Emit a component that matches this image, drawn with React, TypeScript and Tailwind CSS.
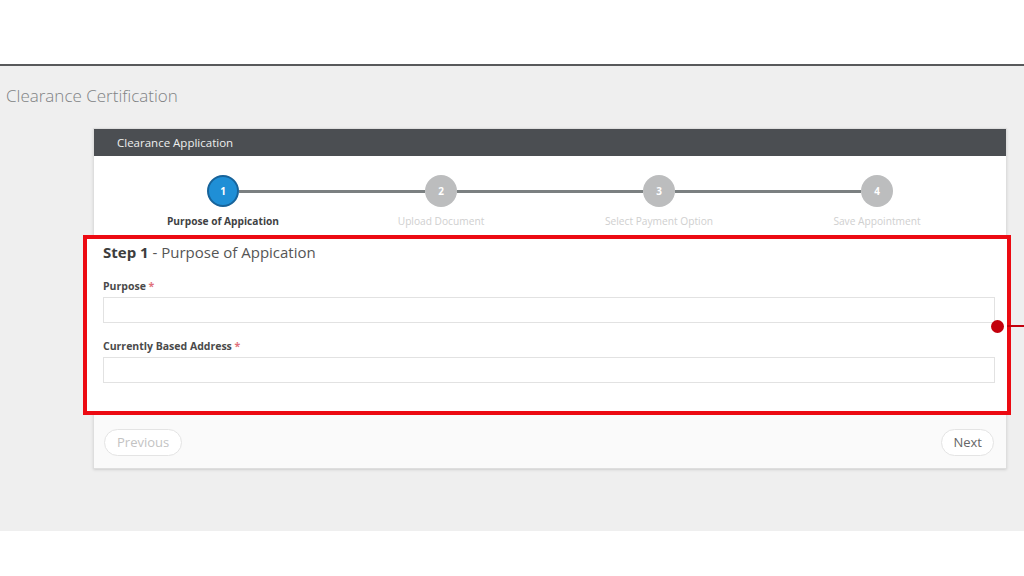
const steps = [
  { n: 1, label: "Purpose of Appication", active: true },
  { n: 2, label: "Upload Document", active: false },
  { n: 3, label: "Select Payment Option", active: false },
  { n: 4, label: "Save Appointment", active: false },
];

function Stepper() {
  return (
    <div className="flex pl-[20px] pt-[19px]">
      {steps.map((s, i) => (
        <div key={s.n} className="flex w-[218px] flex-col items-center">
          <div className="flex w-full items-center">
            <div className={`h-[3px] flex-1 ${i === 0 ? "bg-transparent" : "bg-[#7b8081]"}`}></div>
            <div
              className={`flex h-[32px] w-[32px] items-center justify-center rounded-full text-[10px] font-bold text-white ${
                s.active ? "border-2 border-[#17639a] bg-[#1f8fd6]" : "bg-[#bcbdbe]"
              }`}
            >
              {s.n}
            </div>
            <div className={`h-[3px] flex-1 ${i === steps.length - 1 ? "bg-transparent" : "bg-[#7b8081]"}`}></div>
          </div>
          <div
            className={`mt-[7px] text-[10.2px] leading-[14px] ${
              s.active ? "font-bold text-[#3f4244]" : "text-[#cfcfcf]"
            }`}
          >
            {s.label}
          </div>
        </div>
      ))}
    </div>
  );
}

function Field({ label }: { label: string }) {
  return (
    <div className="mt-[16px]">
      <div className="text-[10.5px] font-bold leading-[14px] text-[#4a4a4a]">
        {label} <span className="text-[#e0707a]">*</span>
      </div>
      <div className="mt-[4px] h-[26px] border border-[#e2e2e2] bg-white"></div>
    </div>
  );
}

export default function App() {
  return (
    <div className="flex h-[576px] w-[1024px] flex-col overflow-hidden bg-white font-['Open_Sans',sans-serif]">
      <div className="h-[64px] bg-white"></div>
      <div className="h-[2px] bg-[#58595b]"></div>
      <main className="h-[465px] bg-[#efefef] pt-[18px]">
        <h1 className="pl-[6px] text-[17px] font-light leading-[24px] text-[#808284]">Clearance Certification</h1>
        <div className="ml-[93px] mt-[20px] w-[914px] border border-[#dedede] bg-[#fafafa] shadow-sm">
          <div className="flex h-[27px] items-center bg-[#4b4e52] pl-[23px] text-[11.5px] text-[#eeeeee]">
            Clearance Application
          </div>
          <div className="bg-white pb-[7px]">
            <Stepper />
          </div>
          <section className="relative -ml-[11px] -mr-[5px] border-4 border-[#ec0a12] bg-white pb-[28px] pl-[16px] pr-[12px] pt-[2px]">
            <h2 className="text-[15px] leading-[22px] text-[#555]">
              <span className="font-bold text-[#3d3d3d]">Step 1</span> - Purpose of Appication
            </h2>
            <Field label="Purpose" />
            <Field label="Currently Based Address" />
            <div className="absolute right-[3px] top-[81px] h-[13px] w-[13px] rounded-full bg-[#c3000c]"></div>
            <div className="absolute -right-[22px] top-[86px] h-[2px] w-[22px] bg-[#c3000c]"></div>
          </section>
          <div className="flex items-center justify-between pb-[12px] pl-[10px] pr-[12px] pt-[14px]">
            <button className="h-[27px] rounded-full border border-[#e4e4e4] bg-white px-[12px] text-[13px] text-[#c3c3c3]">
              Previous
            </button>
            <button className="h-[27px] rounded-full border border-[#e4e4e4] bg-white px-[11px] text-[13px] text-[#666]">
              Next
            </button>
          </div>
        </div>
      </main>
      <div className="flex-1 bg-white"></div>
    </div>
  );
}
